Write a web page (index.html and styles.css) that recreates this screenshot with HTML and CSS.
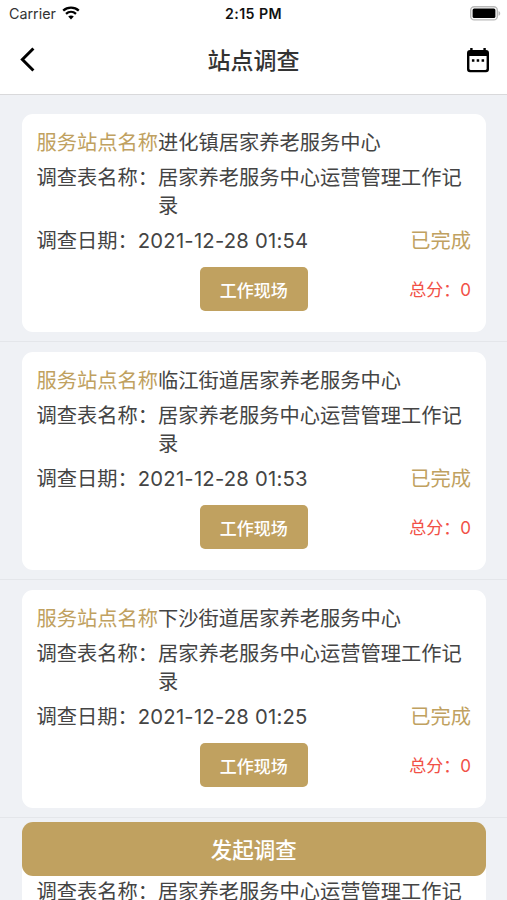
FILE: index.html
```html
<!DOCTYPE html>
<html lang="zh-CN">
<head>
<meta charset="utf-8">
<title>站点调查</title>
<link rel="stylesheet" href="styles.css">
</head>
<body>
<div class="screen">
  <div class="status">
    <div class="carrier">Carrier
      <svg class="wifi" width="18" height="14" viewBox="0 0 18 14"><path d="M1.2 4.7C5.6.7 12.4.7 16.8 4.7M4 7.9c2.9-2.6 7.1-2.6 10 0" fill="none" stroke="#000" stroke-width="2.3"/><path d="M6.2 10.5c1.6-1.5 4-1.5 5.6 0L9 13.4z"/></svg>
    </div>
    <div class="time">2:15 PM</div>
    <svg class="battery" width="31" height="15" viewBox="0 0 31 15"><rect x=".7" y=".7" width="26.6" height="13.2" rx="3.5" fill="#fff" stroke="#b9b9b9" stroke-width="1.4"/><rect x="2.6" y="2.6" width="22.8" height="9.4" rx="1.5"/><path d="M28.5 5c2.3.8 2.3 4 0 4.8z" fill="#b9b9b9"/></svg>
  </div>
  <header class="nav">
    <svg class="back" width="16" height="25" viewBox="0 0 16 25"><path d="M13.4 1.5 2.4 12.5l11 11" fill="none" stroke="#000" stroke-width="3"/></svg>
    <h1>站点调查</h1>
    <svg class="calendar" width="24" height="26" viewBox="0 0 24 26"><path d="M4.2 1h2.4v2h10.8V1h2.4v2H20a3 3 0 0 1 3 3v16.3a3 3 0 0 1-3 3H4a3 3 0 0 1-3-3V6a3 3 0 0 1 3-3h.2zM3.4 9v12.7c0 .7.5 1.2 1.2 1.2h14.8c.7 0 1.2-.5 1.2-1.2V9z" fill-rule="evenodd"/><path d="M5.9 12.2h2.5v2.5H5.9zm4.8 0h2.5v2.5h-2.5zm4.9 0h2.5v2.5h-2.5z"/></svg>
  </header>
  <ul class="list">
    <li class="item"><article class="card">
      <div class="row"><span class="gold">服务站点名称</span><span class="value">进化镇居家养老服务中心</span></div>
      <div class="row"><span>调查表名称：</span><span class="value">居家养老服务中心运营管理工作记录</span></div>
      <div class="row"><span>调查日期：</span><span class="value date">2021-12-28 01:54</span><span class="gold">已完成</span></div>
      <div class="actions"><button class="site">工作现场</button><span class="score">总分：0</span></div>
    </article></li>
    <li class="item"><article class="card">
      <div class="row"><span class="gold">服务站点名称</span><span class="value">临江街道居家养老服务中心</span></div>
      <div class="row"><span>调查表名称：</span><span class="value">居家养老服务中心运营管理工作记录</span></div>
      <div class="row"><span>调查日期：</span><span class="value date">2021-12-28 01:53</span><span class="gold">已完成</span></div>
      <div class="actions"><button class="site">工作现场</button><span class="score">总分：0</span></div>
    </article></li>
    <li class="item"><article class="card">
      <div class="row"><span class="gold">服务站点名称</span><span class="value">下沙街道居家养老服务中心</span></div>
      <div class="row"><span>调查表名称：</span><span class="value">居家养老服务中心运营管理工作记录</span></div>
      <div class="row"><span>调查日期：</span><span class="value date">2021-12-28 01:25</span><span class="gold">已完成</span></div>
      <div class="actions"><button class="site">工作现场</button><span class="score">总分：0</span></div>
    </article></li>
    <li class="item"><article class="card">
      <div class="row"><span class="gold">服务站点名称</span></div>
      <div class="row"><span>调查表名称：</span><span class="value">居家养老服务中心运营管理工作记</span></div>
    </article></li>
  </ul>
  <button class="start">发起调查</button>
</div>
</body>
</html>
```
FILE: styles.css
```css
* { box-sizing: border-box; }
body { margin: 0; font-family: Inter, "Noto Sans CJK SC", sans-serif; color: #444; }
button { border: 0; padding: 0; font-family: inherit; color: #fff; background: #c0a160; }
svg { display: block; }

.screen { position: relative; height: 900px; overflow: hidden; background: #eff1f5; }

.status {
  display: grid;
  grid-template-columns: 1fr auto 1fr;
  align-items: center;
  height: 27px;
  padding: 0 6px 0 9px;
  background: #fff;
}
.carrier { display: flex; align-items: center; gap: 6px; font-size: 14.3px; color: #333; }
.wifi { margin-top: -2px; }
.time { margin-left: -3px; font-size: 14.2px; font-weight: 600; letter-spacing: .45px; color: #111; }
.battery { justify-self: end; }

.nav {
  display: grid;
  grid-template-columns: 1fr auto 1fr;
  align-items: center;
  height: 68px;
  padding: 0 17px 2px 20px;
  background: #fff;
  border-bottom: 1px solid #d9d9db;
}
.nav h1 { margin: 0; padding: 2px 3px 0 0; font-size: 23px; font-weight: 500; line-height: 32px; color: #333; }
.calendar { justify-self: end; }

.list { margin: 0; padding: 9px 0 0; list-style: none; }
.item { height: 238px; padding: 10px 21.5px 9px 22px; border-bottom: 1px solid #e4e6ea; }
.card {
  display: flex;
  flex-direction: column;
  gap: 7px;
  height: 218px;
  padding: 15px 14.5px 14px;
  border-radius: 11px;
  background: #fff;
}
.row { display: flex; font-size: 20.25px; line-height: 28px; }
.row > span { flex: none; }
.row > .value { flex: 1; }
.date { letter-spacing: .22px; }
.gold { color: #c0a160; }

.actions {
  display: grid;
  grid-template-columns: 1fr 108px 1fr;
  align-items: center;
  margin-top: 5px;
}
.site { grid-column: 2; height: 44px; border-radius: 5px; font-size: 17px; font-weight: 500; }
.score { justify-self: end; padding-bottom: 2px; font-size: 17px; color: #f15046; }

.start {
  position: absolute;
  left: 22px;
  right: 21.5px;
  top: 822px;
  height: 54px;
  padding-bottom: 2px;
  border-radius: 11px;
  font-size: 21.5px;
  font-weight: 500;
}
```
